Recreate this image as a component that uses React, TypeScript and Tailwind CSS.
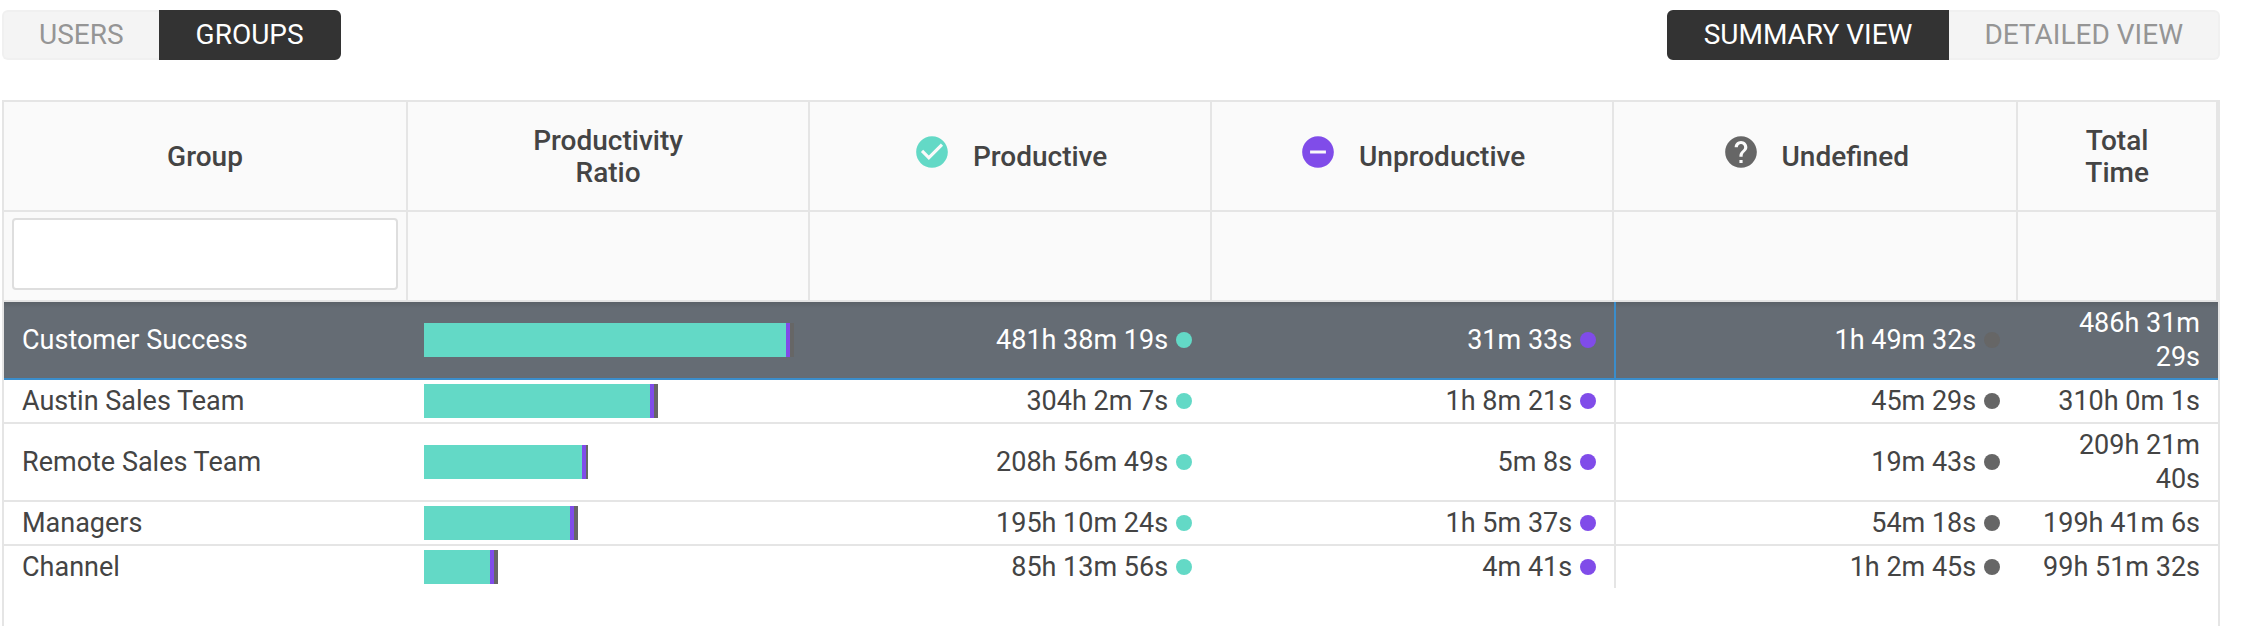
import { useState } from "react";
import { MdCheckCircle, MdHelp, MdRemoveCircle } from "react-icons/md";

type Row = {
  group: string;
  bar: number;
  undefinedBar: string;
  productive: string;
  unproductive: string;
  undef: string;
  total: string;
};

const rows: Row[] = [
  { group: "Customer Success", bar: 362 / 370, undefinedBar: "w-1", productive: "481h 38m 19s", unproductive: "31m 33s", undef: "1h 49m 32s", total: "486h 31m 29s" },
  { group: "Austin Sales Team", bar: 226 / 370, undefinedBar: "w-1", productive: "304h 2m 7s", unproductive: "1h 8m 21s", undef: "45m 29s", total: "310h 0m 1s" },
  { group: "Remote Sales Team", bar: 158 / 370, undefinedBar: "w-0.5", productive: "208h 56m 49s", unproductive: "5m 8s", undef: "19m 43s", total: "209h 21m 40s" },
  { group: "Managers", bar: 146 / 370, undefinedBar: "w-1", productive: "195h 10m 24s", unproductive: "1h 5m 37s", undef: "54m 18s", total: "199h 41m 6s" },
  { group: "Channel", bar: 66 / 370, undefinedBar: "w-1", productive: "85h 13m 56s", unproductive: "4m 41s", undef: "1h 2m 45s", total: "99h 51m 32s" },
];

function Toggle({ options, value, onChange }: { options: string[]; value: string; onChange: (v: string) => void }) {
  return (
    <div className="flex">
      {options.map((option) => (
        <button
          key={option}
          type="button"
          aria-pressed={option === value}
          onClick={() => onChange(option)}
          className={
            "h-[50px] border-2 px-[35px] text-[28px] leading-8 uppercase first:rounded-l-md last:rounded-r-md " +
            (option === value
              ? "border-[#333] bg-[#333] text-white"
              : "border-[#f0f0f0] bg-[#f4f4f4] text-[#959595] first:border-r-0 last:border-l-0")
          }
        >
          {option}
        </button>
      ))}
    </div>
  );
}

const headCell = "h-[110px] border-r-2 border-b-2 border-[#e5e5e5] bg-[#fafafa] px-0 pt-0.5 pb-0 text-center font-medium";
const filterCell = "h-[90px] border-r-2 border-b-2 border-[#e5e5e5] bg-[#fafafa] px-2 pt-1.5 pb-2.5";

function IconHead({ icon, label }: { icon: React.ReactNode; label: string }) {
  return (
    <div className="flex items-center justify-center gap-[22px]">
      {icon}
      <span>{label}</span>
    </div>
  );
}

function Time({ value, dot }: { value: string; dot: string }) {
  return (
    <div className="flex items-center justify-end gap-2">
      <span>{value}</span>
      <span className={"size-4 rounded-full " + dot} />
    </div>
  );
}

export default function App() {
  const [entity, setEntity] = useState("Groups");
  const [view, setView] = useState("Summary view");
  const [filter, setFilter] = useState("");
  const [selected, setSelected] = useState("Customer Success");

  return (
    <div className="flex min-h-screen flex-col bg-white pt-2.5 pr-10 pl-0.5 font-['Roboto',sans-serif] text-[#444]">
      <div className="mb-10 flex justify-between">
        <Toggle options={["Users", "Groups"]} value={entity} onChange={setEntity} />
        <Toggle options={["Summary view", "Detailed view"]} value={view} onChange={setView} />
      </div>

      <div className="flex-1 border-x-2 border-t-2 border-[#e5e5e5]">
        <table className="w-full table-fixed border-separate border-spacing-0">
          <colgroup>
            <col className="w-[18.25%]" />
            <col className="w-[18.16%]" />
            <col className="w-[18.16%]" />
            <col className="w-[18.16%]" />
            <col className="w-[18.25%]" />
            <col />
          </colgroup>
          <thead className="text-[28px] leading-8">
            <tr>
              <th scope="col" className={headCell}>Group</th>
              <th scope="col" className={headCell}>Productivity<br />Ratio</th>
              <th scope="col" className={headCell}>
                <IconHead icon={<MdCheckCircle className="mb-2.5 size-[38px] text-[#63d9c6]" />} label="Productive" />
              </th>
              <th scope="col" className={headCell}>
                <IconHead icon={<MdRemoveCircle className="mb-2.5 size-[38px] text-[#804ce9]" />} label="Unproductive" />
              </th>
              <th scope="col" className={headCell}>
                <IconHead icon={<MdHelp className="mb-2.5 size-[38px] text-[#666]" />} label="Undefined" />
              </th>
              <th scope="col" className={headCell}>Total<br />Time</th>
            </tr>
            <tr>
              <td className={filterCell}>
                <input
                  type="text"
                  aria-label="Filter groups"
                  value={filter}
                  onChange={(e) => setFilter(e.target.value)}
                  className="block h-[72px] w-full rounded border-2 border-[#dedede] bg-white px-4 text-[26px] outline-none"
                />
              </td>
              <td className={filterCell} />
              <td className={filterCell} />
              <td className={filterCell} />
              <td className={filterCell} />
              <td className={filterCell} />
            </tr>
          </thead>
          <tbody className="text-[27px] leading-[34px]">
            {rows
              .filter((row) => row.group.toLowerCase().includes(filter.toLowerCase()))
              .map((row, i, shown) => {
                const active = row.group === selected;
                const line = [
                  active ? "border-[#3a8dcb]" : "border-[#e5e5e5]",
                  i < shown.length - 1 ? "border-b-2" : "",
                ].join(" ");
                return (
                  <tr
                    key={row.group}
                    onClick={() => setSelected(row.group)}
                    className={
                      (active ? "bg-[#656c74] text-white " : "bg-white ") +
                      (i === 0 ? "bg-[linear-gradient(rgba(0,0,0,0.1),transparent_6px)]" : "")
                    }
                  >
                    <td className={`${line} px-[18px] py-1`}>{row.group}</td>
                    <td className={`${line} px-4 py-1`}>
                      <div className="flex h-[34px]">
                        <div className="bg-[#63d9c6]" style={{ width: `${row.bar * 100}%` }} />
                        <div className="w-1 shrink-0 bg-[#804ce9]" />
                        <div className={`shrink-0 bg-[#666] ${row.undefinedBar}`} />
                      </div>
                    </td>
                    <td className={`${line} px-5 py-1`}><Time value={row.productive} dot="bg-[#63d9c6]" /></td>
                    <td className={`${line} px-[18px] py-1`}><Time value={row.unproductive} dot="bg-[#804ce9]" /></td>
                    <td className={`${line} border-l-2 px-[18px] py-1`}><Time value={row.undef} dot="bg-[#666]" /></td>
                    <td className={`${line} px-[18px] py-1 text-right`}>{row.total}</td>
                  </tr>
                );
              })}
          </tbody>
        </table>
      </div>
    </div>
  );
}
